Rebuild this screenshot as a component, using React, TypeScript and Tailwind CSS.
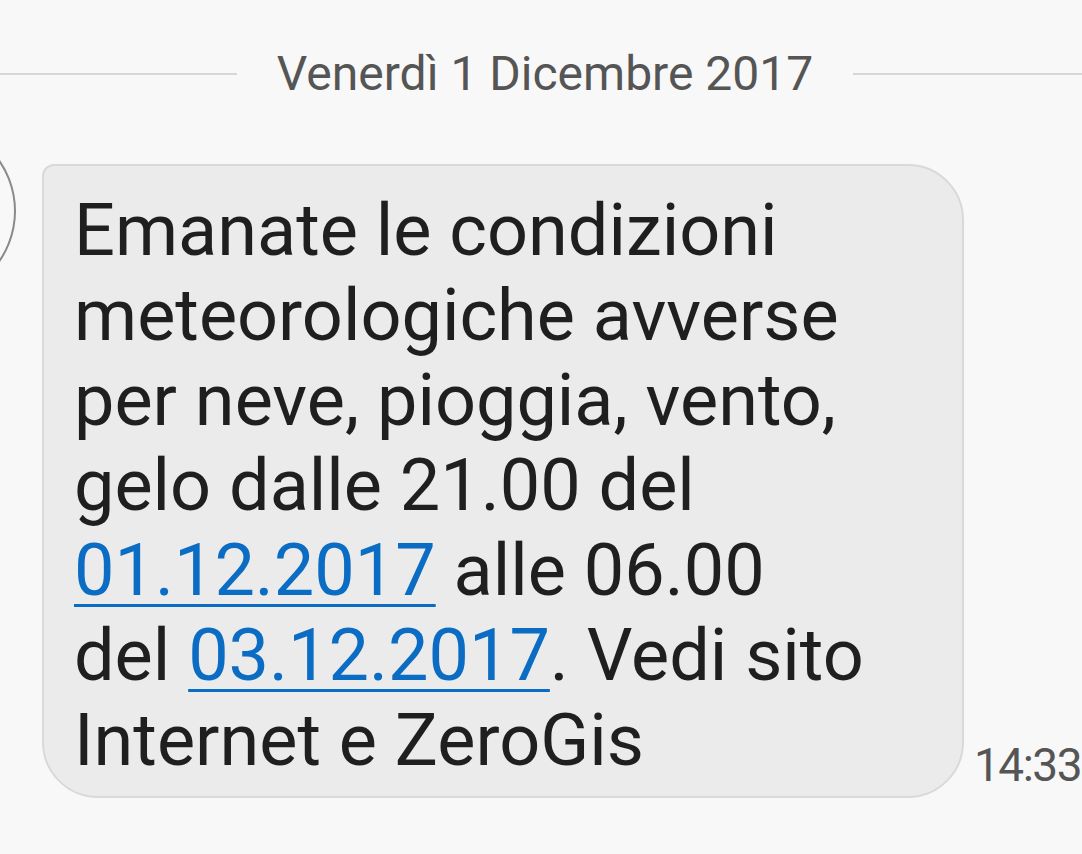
const lines: { text: string; link?: boolean }[][] = [
  [{ text: "Emanate le condizioni" }],
  [{ text: "meteorologiche avverse" }],
  [{ text: "per neve, pioggia, vento," }],
  [{ text: "gelo dalle 21.00 del" }],
  [{ text: "01.12.2017", link: true }, { text: " alle 06.00" }],
  [{ text: "del " }, { text: "03.12.2017", link: true }, { text: ". Vedi sito" }],
  [{ text: "Internet e ZeroGis" }],
]

const App = () => {
  return (
    <div className="w-[1082px] h-[854px] overflow-hidden bg-[#f8f8f8] font-['Roboto',sans-serif] relative">
      <div className="flex items-center pt-[44px]">
        <div className="w-[237px] h-[2px] bg-[#d6d6d6]" />
        <div className="flex-1 text-center text-[48px] leading-[60px] text-[#555555]">Venerdì 1 Dicembre 2017</div>
        <div className="w-[229px] h-[2px] bg-[#d6d6d6]" />
      </div>

      <div className="flex items-end mt-[60px]">
        <div className="relative w-[42px] self-stretch">
          <div className="absolute left-[-162px] top-[-42px] w-[178px] h-[178px] rounded-full border-2 border-[#8a8a8a]" />
        </div>
        <div className="w-[922px] bg-[#ebebeb] border-2 border-[#d9d9d9] rounded-tl-[12px] rounded-tr-[56px] rounded-br-[56px] rounded-bl-[56px] pl-[30px] pt-[22px] pb-[13px]">
          {lines.map((line, i) => (
            <div key={i} className="text-[72px] leading-[85px] text-[#1f1f1f] whitespace-pre">
              {line.map((part, j) =>
                part.link ? (
                  <span key={j} className="text-[#0b6cc4] underline decoration-[3px] underline-offset-[9px]">
                    {part.text}
                  </span>
                ) : (
                  <span key={j}>{part.text}</span>
                ),
              )}
            </div>
          ))}
        </div>
        <div className="pl-[10px] pb-[8px] text-[46px] leading-[50px] text-[#555555] tracking-[-1.5px]">14:33</div>
      </div>
    </div>
  )
}

export default App
